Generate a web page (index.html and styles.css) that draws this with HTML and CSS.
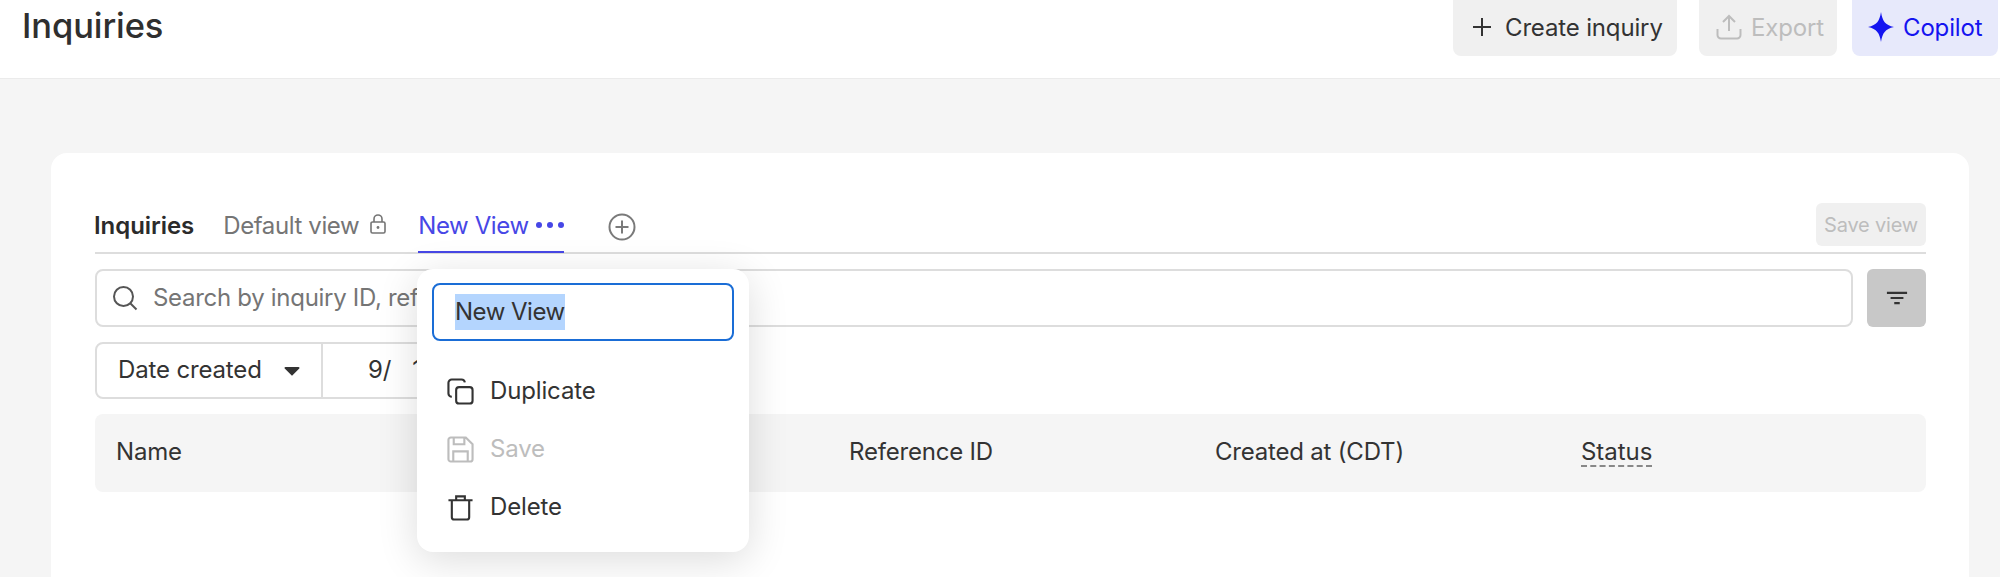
FILE: index.html
```html
<!DOCTYPE html>
<html lang="en">
<head>
<meta charset="utf-8">
<title>Inquiries</title>
<link rel="stylesheet" href="styles.css">
</head>
<body>
<header class="topbar">
  <h1 class="title">Inquiries</h1>
  <div class="actions">
    <button class="btn btn-create">
      <svg class="btn-icon" viewBox="0 0 20 20"><path d="M10 1v18M1 10h18" fill="none" stroke="currentColor" stroke-width="2"/></svg>
      Create inquiry
    </button>
    <button class="btn btn-export">
      <svg class="btn-icon btn-icon-export" viewBox="0 0 26 26"><path d="M13 17V2M7 8l6-6 6 6M1.500 15v6a3.500 3.500 0 0 0 3.500 3.500h16a3.500 3.500 0 0 0 3.500-3.500v-6" fill="none" stroke="currentColor" stroke-width="2"/></svg>
      Export
    </button>
    <button class="btn btn-copilot">
      <svg class="btn-icon btn-icon-star" viewBox="0 0 26 30"><path d="M13 0C14.500 9 17 13 26 15 17 17 14.500 21 13 30 11.500 21 9 17 0 15 9 13 11.500 9 13 0Z" fill="currentColor"/></svg>
      Copilot
    </button>
  </div>
</header>

<main class="card">
  <nav class="tabs">
    <span class="tab-heading">Inquiries</span>
    <span class="tab tab-default">Default view
      <svg class="lock" viewBox="0 0 16 20"><path d="M4 8V5a4 4 0 0 1 8 0v3M2.500 8h11a1.500 1.500 0 0 1 1.500 1.500v8a1.500 1.500 0 0 1-1.500 1.500h-11A1.500 1.500 0 0 1 1 17.500v-8A1.500 1.500 0 0 1 2.500 8Z" fill="none" stroke="currentColor" stroke-width="1.600"/><circle cx="8" cy="13.500" r="1.400" fill="currentColor"/></svg>
    </span>
    <span class="tab tab-active">New View
      <svg class="dots" viewBox="0 0 28 6"><circle cx="3" cy="3" r="3"/><circle cx="14" cy="3" r="3"/><circle cx="25" cy="3" r="3"/></svg>
    </span>
    <svg class="add" viewBox="0 0 28 28"><circle cx="14" cy="14" r="12.500" fill="none" stroke="currentColor" stroke-width="2"/><path d="M14 7.500v13M7.500 14h13" stroke="currentColor" stroke-width="2"/></svg>
    <button class="save-view">Save view</button>
  </nav>

  <div class="search-row">
    <div class="search">
      <svg class="search-icon" viewBox="0 0 26 26"><circle cx="11.500" cy="11.500" r="9.500" fill="none" stroke="currentColor" stroke-width="2"/><path d="M18.500 18.500l6 6" stroke="currentColor" stroke-width="2"/></svg>
      <span class="placeholder">Search by inquiry ID, reference ID, or account ID</span>
    </div>
    <button class="filter">
      <svg viewBox="0 0 24 14" class="filter-icon"><path d="M1 1.500h22M5 7h14M9 12.500h6" stroke="currentColor" stroke-width="2.400"/></svg>
    </button>
  </div>

  <div class="date-row">
    <div class="date-select">Date created
      <svg class="caret" viewBox="0 0 16 10"><path d="M1.500 1h13a1 1 0 0 1 .8 1.600L8.800 9a1 1 0 0 1-1.600 0L.7 2.600A1 1 0 0 1 1.500 1Z" fill="currentColor"/></svg>
    </div>
    <div class="date-range"><span>9/</span><span>1</span></div>
  </div>

  <div class="table-head">
    <span class="col col-name">Name</span>
    <span class="col col-ref">Reference ID</span>
    <span class="col col-created">Created at (CDT)</span>
    <span class="col col-status"><span class="dashed">Status</span></span>
  </div>

  <section class="popover">
    <div class="popover-input"><span class="selected">New View</span></div>
    <ul class="menu">
      <li class="menu-item">
        <svg class="menu-icon" viewBox="0 0 28 28"><path d="M5 19.500A3.500 3.500 0 0 1 1.500 16V5A3.500 3.500 0 0 1 5 1.500h10A3.500 3.500 0 0 1 18.500 4.500" fill="none" stroke="currentColor" stroke-width="2.200"/><rect x="9.500" y="9.500" width="17" height="17" rx="3" fill="none" stroke="currentColor" stroke-width="2.200"/></svg>
        <span class="menu-label">Duplicate</span>
      </li>
      <li class="menu-item menu-item-disabled">
        <svg class="menu-icon" viewBox="0 0 28 28"><path d="M4 1.500h15.500l7 7V24a2.500 2.500 0 0 1-2.500 2.500H4A2.500 2.500 0 0 1 1.500 24V4A2.500 2.500 0 0 1 4 1.500ZM7 1.500v7h11v-7M6.500 26.500V16h15v10.500" fill="none" stroke="currentColor" stroke-width="2.200"/></svg>
        <span class="menu-label">Save</span>
      </li>
      <li class="menu-item">
        <svg class="menu-icon" viewBox="0 0 28 28"><path d="M1.500 6.500h25M9.500 6.500V2.500h9v4M5 6.500V24a2.500 2.500 0 0 0 2.500 2.500h13A2.500 2.500 0 0 0 23 24V6.500" fill="none" stroke="currentColor" stroke-width="2.200"/></svg>
        <span class="menu-label">Delete</span>
      </li>
    </ul>
  </section>
</main>
</body>
</html>
```
FILE: styles.css
```css
* { box-sizing: border-box; }
html, body { height: 100%; }
body {
  margin: 0;
  overflow: hidden;
  background: #f5f5f5;
  color: #333;
  font-family: Inter, "Liberation Sans", sans-serif;
  font-size: 24px;
  letter-spacing: -0.3px;
}
button { font: inherit; letter-spacing: inherit; border: 0; }

.topbar {
  height: 79px;
  display: flex;
  justify-content: space-between;
  align-items: flex-end;
  padding: 0 2px 22px 22px;
  background: #fff;
  border-bottom: 1px solid #ebebeb;
}
.title {
  margin: 0 0 5px;
  font-size: 34.500px;
  line-height: 50px;
  font-weight: 500;
  letter-spacing: -0.1px;
  color: #2f2f2f;
}
.actions { display: flex; gap: 15px; }
.btn {
  height: 70px;
  display: flex;
  align-items: center;
  padding: 12px 14px 0;
  border-radius: 8px;
  background: #f0f0f0;
  color: #333;
  font-size: 24px;
  letter-spacing: -0.15px;
}
.btn-create { width: 224px; padding-left: 19px; gap: 13px; margin-right: 7px; }
.btn-export { width: 138px; padding-left: 17px; gap: 9px; color: #bdbdbd; }
.btn-copilot { width: 146px; padding-left: 16px; gap: 9px; background: #e7e9fb; color: #1414f0; }
.btn-icon { width: 20px; height: 20px; flex: none; }
.btn-icon-export { width: 26px; height: 26px; }
.btn-icon-star { width: 26px; height: 30px; }

.card {
  position: relative;
  margin: 74px 31px 0 51px;
  padding: 50px 43px 100px 44px;
  background: #fff;
  border-radius: 16px;
}

.tabs {
  height: 51px;
  display: flex;
  align-items: center;
  border-bottom: 2px solid #ddd;
}
.tab-heading { font-weight: 600; font-size: 24px; letter-spacing: -0.05px; margin: 0 29px 5px -1px; color: #2b2b2b; }
.tab {
  height: 51px;
  display: flex;
  align-items: center;
  padding-bottom: 5px;
  letter-spacing: -0.4px;
}
.tab-default { color: #757575; margin-right: 32px; gap: 11px; }
.lock { width: 16px; height: 20px; margin-bottom: 2px; }
.tab-active {
  color: #4747e6;
  border-bottom: 2px solid #4747e6;
  gap: 7px;
  padding-bottom: 3px;
}
.dots { width: 28px; height: 6px; fill: #4747e6; }
.add { width: 28px; height: 28px; color: #7a7a7a; margin: 0 0 2px 44px; }
.save-view {
  margin: 0 0 6px auto;
  width: 110px;
  height: 43px;
  padding: 0;
  border-radius: 6px;
  background: #f0f0f0;
  color: #bdbdbd;
  font-size: 20px;
  letter-spacing: -0.2px;
}

.search-row { display: flex; gap: 14px; margin-top: 15px; }
.search {
  flex: 1;
  height: 58px;
  display: flex;
  align-items: center;
  gap: 15px;
  padding: 0 0 1px 15px;
  border: 2px solid #ddd;
  border-radius: 8px;
}
.search-icon { width: 26px; height: 26px; color: #555; }
.placeholder { color: #757575; white-space: nowrap; }
.filter {
  width: 59px;
  height: 58px;
  padding: 0;
  display: flex;
  align-items: center;
  justify-content: center;
  background: #c8c8c8;
  border-radius: 6px;
}
.filter-icon { width: 22px; height: 14px; color: #333; }

.date-row {
  display: flex;
  width: 600px;
  height: 57px;
  margin-top: 15px;
  border: 2px solid #ddd;
  border-radius: 8px;
  letter-spacing: -0.15px;
}
.date-select {
  width: 226px;
  display: flex;
  align-items: center;
  gap: 22px;
  padding: 0 0 2px 21px;
  border-right: 2px solid #ddd;
}
.caret { width: 16px; height: 10px; color: #333; margin-top: 2px; }
.date-range { display: flex; align-items: center; gap: 21px; padding: 0 0 2px 45px; }

.table-head {
  position: relative;
  height: 78px;
  margin-top: 15px;
  display: grid;
  grid-template-columns: 733px 365px 366px 1fr;
  align-items: center;
  padding: 0 0 3px 22px;
  background: #f5f5f5;
  border-radius: 8px;
  letter-spacing: -0.2px;
}
.col-ref { margin-left: -1px; }
.col-name { margin-left: -1px; }
.dashed { border-bottom: 2px dashed #888; line-height: 26px; display: inline-block; letter-spacing: -0.05px; }

.popover {
  position: absolute;
  top: 116px;
  left: 366px;
  width: 332px;
  height: 283px;
  padding: 14px 15px;
  background: #fff;
  border-radius: 16px;
  box-shadow: 0 8px 40px rgba(0, 0, 0, 0.14);
}
.popover-input {
  height: 58px;
  display: flex;
  align-items: center;
  padding-left: 21px;
  border: 2px solid #1a6dd6;
  border-radius: 8px;
}
.selected { background: #b4d5fe; line-height: 36px; color: #333; letter-spacing: -0.5px; }
.menu { list-style: none; margin: 21px 0 0; padding: 0; }
.menu-item {
  height: 58px;
  display: flex;
  align-items: center;
  gap: 16px;
  padding-left: 15px;
  letter-spacing: -0.15px;
}
.menu-label { margin-bottom: 2px; }
.menu-item-disabled { color: #bdbdbd; }
.menu-icon { width: 27px; height: 27px; flex: none; }
```
